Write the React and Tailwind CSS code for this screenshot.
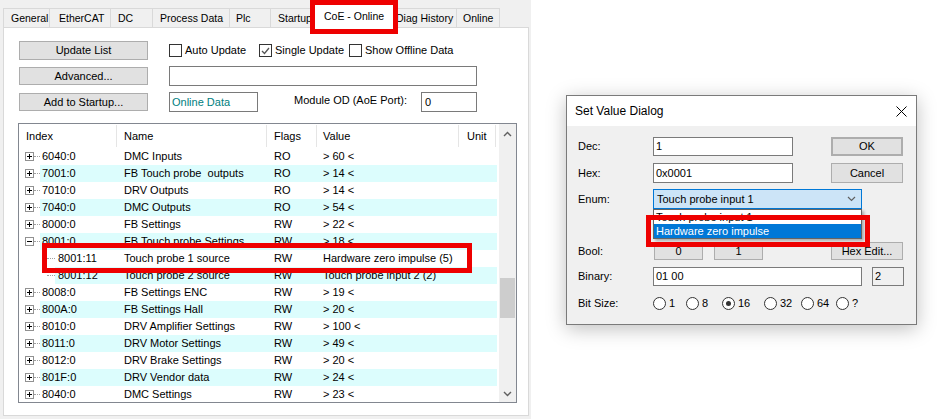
import React from "react";

const tabs = [
  { label: "General", cls: "w-[47px] pl-[7px]" },
  { label: "EtherCAT", cls: "w-[61px] pl-[9px]" },
  { label: "DC", cls: "w-[42px] pl-[7px]" },
  { label: "Process Data", cls: "w-[77px] pl-[7px]" },
  { label: "Plc", cls: "w-[41px] pl-[6px]" },
  { label: "Startup", cls: "w-[40px] pl-[7px]" },
  { label: "CoE - Online", cls: "w-[83px] pl-[12px]", active: true },
  { label: "Diag History", cls: "w-[63px] pl-[2px]" },
  { label: "Online", cls: "w-[43px] pl-[6px]" },
];

const rows = [
  { idx: "6040:0", name: "DMC Inputs", flags: "RO", value: "> 60 <" },
  { idx: "7001:0", name: "FB Touch probe  outputs", flags: "RO", value: "> 14 <" },
  { idx: "7010:0", name: "DRV Outputs", flags: "RO", value: "> 14 <" },
  { idx: "7040:0", name: "DMC Outputs", flags: "RO", value: "> 54 <" },
  { idx: "8000:0", name: "FB Settings", flags: "RW", value: "> 22 <" },
  { idx: "8001:0", name: "FB Touch probe Settings", flags: "RW", value: "> 18 <", open: true },
  { idx: "8001:11", name: "Touch probe 1 source", flags: "RW", value: "Hardware zero impulse (5)", child: true },
  { idx: "8001:12", name: "Touch probe 2 source", flags: "RW", value: "Touch probe input 2 (2)", child: true },
  { idx: "8008:0", name: "FB Settings ENC", flags: "RW", value: "> 19 <" },
  { idx: "800A:0", name: "FB Settings Hall", flags: "RW", value: "> 20 <" },
  { idx: "8010:0", name: "DRV Amplifier Settings", flags: "RW", value: "> 100 <" },
  { idx: "8011:0", name: "DRV Motor Settings", flags: "RW", value: "> 49 <" },
  { idx: "8012:0", name: "DRV Brake Settings", flags: "RW", value: "> 20 <" },
  { idx: "801F:0", name: "DRV Vendor data", flags: "RW", value: "> 24 <" },
  { idx: "8040:0", name: "DMC Settings", flags: "RW", value: "> 23 <" },
];

function Button({ children, className }) {
  return (
    <div className={`flex items-center justify-center bg-[#e1e1e1] border border-[#adadad] shrink-0 ${className}`}>
      {children}
    </div>
  );
}

function Check({ label, checked, className }) {
  return (
    <div className={`flex items-center gap-[3px] ${className}`}>
      <div className="w-[13px] h-[13px] shrink-0 border border-[#333] bg-white flex items-center justify-center">
        {checked && (
          <svg width="9" height="8" viewBox="0 0 9 8">
            <path d="M1 4 L3.5 6.5 L8 1" fill="none" stroke="#555" strokeWidth="1.3" />
          </svg>
        )}
      </div>
      <span className="whitespace-nowrap">{label}</span>
    </div>
  );
}

function Expander({ open }) {
  return (
    <svg width="9" height="9" viewBox="0 0 9 9" className="shrink-0">
      <rect x="0.5" y="0.5" width="8" height="8" fill="white" stroke="#919191" />
      <line x1="2" y1="4.5" x2="7" y2="4.5" stroke="#000" />
      {!open && <line x1="4.5" y1="2" x2="4.5" y2="7" stroke="#000" />}
    </svg>
  );
}

function Row({ r, i }) {
  const cyan = i % 2 === 1;
  return (
    <div className="flex h-[17px] leading-[17px] shrink-0 w-[478px]">
      {r.child ? (
        <div className="w-[36px] shrink-0 flex items-center pl-[28px]">
          <div className="w-[8px] border-t border-dotted border-[#a0a0a0]" />
        </div>
      ) : (
        <div className="w-[21px] shrink-0 flex items-center pl-[6px]">
          <Expander open={r.open} />
          <div className="w-[6px] border-t border-dotted border-[#a0a0a0]" />
        </div>
      )}
      <div className={`flex flex-1 ${cyan ? "bg-[#dcfdfd]" : "bg-white"}`}>
        <div className={r.child ? "w-[62px] pl-[3px] shrink-0" : "w-[77px] pl-[2px] shrink-0"}>{r.idx}</div>
        <div className="w-[150px] pl-[7px] whitespace-pre shrink-0">{r.name}</div>
        <div className="w-[50px] pl-[7px] shrink-0">{r.flags}</div>
        <div className="w-[142px] pl-[6px] whitespace-nowrap shrink-0">{r.value}</div>
      </div>
    </div>
  );
}

function Radio({ label, checked, className }) {
  return (
    <div className={`flex items-center gap-[3px] ${className}`}>
      <div className="w-[13px] h-[13px] shrink-0 rounded-full border border-[#333] bg-white flex items-center justify-center">
        {checked && <div className="w-[5px] h-[5px] rounded-full bg-[#333]" />}
      </div>
      <span>{label}</span>
    </div>
  );
}

export default function App() {
  return (
    <div className="flex w-[937px] h-[419px] bg-white text-black text-[11px] font-['Liberation_Sans',Arial,sans-serif]">
      {/* left: CoE - Online tab */}
      <div className="relative w-[531px] h-[419px] shrink-0 bg-[#f0f0f0] pt-[8px] pl-[3px]">
        <div className="relative z-10 flex items-end h-[19px] text-[10.5px]">
          {tabs.map((t) =>
            t.active ? (
              <div
                key={t.label}
                className={`h-[24px] mb-[-1px] shrink-0 bg-white border border-b-0 border-[#d9d9d9] flex items-center whitespace-nowrap ${t.cls}`}
              >
                {t.label}
              </div>
            ) : (
              <div
                key={t.label}
                className={`h-[19px] shrink-0 bg-[#f0f0f0] border border-b-0 border-l-0 first:border-l border-[#d9d9d9] flex items-center pt-[2px] whitespace-nowrap overflow-hidden ${t.cls}`}
              >
                {t.label}
              </div>
            )
          )}
        </div>

        <div className="w-[526px] h-[389px] border border-[#d9d9d9] bg-white">
          <div className="flex items-center h-[19px] mt-[13px] ml-[15px]">
            <Button className="w-[129px] h-[19px]">Update List</Button>
            <div className="flex ml-[21px]">
              <Check label="Auto Update" className="w-[90px]" />
              <Check label="Single Update" checked className="w-[90px]" />
              <Check label="Show Offline Data" />
            </div>
          </div>
          <div className="flex items-center h-[20px] mt-[6px] ml-[15px]">
            <Button className="w-[129px] h-[18px]">Advanced...</Button>
            <div className="ml-[21px] w-[308px] h-[20px] border border-[#7a7a7a] bg-white" />
          </div>
          <div className="flex items-center h-[20px] mt-[6px] ml-[15px]">
            <Button className="w-[129px] h-[18px]">Add to Startup...</Button>
            <div className="ml-[21px] w-[89px] h-[20px] border border-[#7a7a7a] bg-white text-[#008080] pl-[2px] leading-[18px]">
              Online Data
            </div>
            <div className="ml-[36px] w-[127px] pb-[3px]">Module OD (AoE Port):</div>
            <div className="w-[56px] h-[20px] border border-[#7a7a7a] bg-white pl-[3px] leading-[18px]">0</div>
          </div>

          <div className="ml-[14px] mt-[11px] w-[499px] h-[280px] border border-[#828790] flex overflow-hidden">
            <div className="w-[480px] shrink-0 flex flex-col overflow-hidden">
              <div className="flex h-[24px] shrink-0 items-center">
                <div className="w-[98px] h-[22px] pl-[7px] flex items-center border-r border-[#e5e5e5]">Index</div>
                <div className="w-[150px] h-[22px] pl-[7px] flex items-center border-r border-[#e5e5e5]">Name</div>
                <div className="w-[50px] h-[22px] pl-[7px] flex items-center border-r border-[#e5e5e5]">Flags</div>
                <div className="w-[142px] h-[22px] pl-[6px] flex items-center border-r border-[#e5e5e5]">Value</div>
                <div className="w-[37px] h-[22px] pl-[8px] flex items-center border-r border-[#e5e5e5]">Unit</div>
              </div>
              {rows.map((r, i) => (
                <Row key={r.idx} r={r} i={i} />
              ))}
            </div>
            <div className="w-[17px] shrink-0 bg-[#f0f0f0] flex flex-col">
              <div className="h-[17px] shrink-0 flex items-center justify-center pt-[3px]">
                <svg width="9" height="6" viewBox="0 0 9 6">
                  <path d="M1 5 L4.5 1.5 L8 5" fill="none" stroke="#606060" strokeWidth="1.4" />
                </svg>
              </div>
              <div className="h-[137px] shrink-0" />
              <div className="h-[40px] mx-[1px] shrink-0 bg-[#cdcdcd]" />
              <div className="flex-1" />
              <div className="h-[17px] shrink-0 flex items-center justify-center">
                <svg width="9" height="6" viewBox="0 0 9 6">
                  <path d="M1 1 L4.5 4.5 L8 1" fill="none" stroke="#606060" strokeWidth="1.4" />
                </svg>
              </div>
            </div>
          </div>
        </div>

        {/* highlight boxes */}
        <div className="absolute left-[310px] top-0 w-[88px] h-[34px] border-[5px] border-[#ee0000] z-20" />
        <div className="absolute left-[42px] top-[243px] w-[430px] h-[30px] border-[5px] border-[#ee0000] z-20" />
      </div>

      {/* right: Set Value Dialog */}
      <div className="pl-[35px] pt-[95px]">
        <div className="relative w-[351px] h-[230px] border border-[#7a7a7a] bg-[#f0f0f0] shadow-[0_4px_18px_rgba(0,0,0,0.25)]">
          <div className="h-[30px] bg-white flex items-center justify-between pl-[8px] pr-[9px] text-[12px]">
            <span>Set Value Dialog</span>
            <svg width="11" height="11" viewBox="0 0 11 11">
              <path d="M0.5 0.5 L10.5 10.5 M10.5 0.5 L0.5 10.5" stroke="#000" strokeWidth="1" />
            </svg>
          </div>

          <div className="pl-[11px] pt-[11px]">
            <div className="flex items-center h-[19px]">
              <div className="w-[75px]">Dec:</div>
              <div className="w-[140px] h-[19px] border border-[#7a7a7a] bg-white pl-[2px] leading-[17px]">1</div>
              <Button className="ml-[38px] w-[72px] h-[19px] border-2 border-[#0078d7]">OK</Button>
            </div>
            <div className="flex items-center h-[20px] mt-[7px]">
              <div className="w-[75px]">Hex:</div>
              <div className="w-[140px] h-[20px] border border-[#7a7a7a] bg-white pl-[2px] leading-[18px]">0x0001</div>
              <Button className="ml-[38px] w-[72px] h-[20px]">Cancel</Button>
            </div>
            <div className="flex items-center h-[20px] mt-[6px]">
              <div className="w-[75px]">Enum:</div>
              <div className="w-[209px] h-[20px] border border-[#0078d7] bg-[#cce4f7] pl-[3px] flex items-center justify-between pr-[5px]">
                <span>Touch probe input 1</span>
                <svg width="9" height="6" viewBox="0 0 9 6">
                  <path d="M1 1 L4.5 4.5 L8 1" fill="none" stroke="#606060" strokeWidth="1.2" />
                </svg>
              </div>
            </div>
            <div className="flex items-center h-[18px] mt-[33px]">
              <div className="w-[75px]">Bool:</div>
              <Button className="ml-[1px] w-[49px] h-[18px]">0</Button>
              <Button className="ml-[11px] w-[49px] h-[18px]">1</Button>
              <Button className="ml-[68px] w-[72px] h-[18px]">Hex Edit...</Button>
            </div>
            <div className="flex items-center h-[19px] mt-[7px]">
              <div className="w-[75px]">Binary:</div>
              <div className="w-[209px] h-[19px] border border-[#7a7a7a] bg-white pl-[2px] leading-[17px]">01 00</div>
              <div className="ml-[10px] w-[32px] h-[19px] border border-[#7a7a7a] pl-[2px] leading-[17px]">2</div>
            </div>
            <div className="flex items-center h-[13px] mt-[11px]">
              <div className="w-[75px]">Bit Size:</div>
              <Radio label="1" className="w-[33px]" />
              <Radio label="8" className="w-[36px]" />
              <Radio label="16" checked className="w-[42px]" />
              <Radio label="32" className="w-[37px]" />
              <Radio label="64" className="w-[35px]" />
              <Radio label="?" />
            </div>
          </div>

          {/* open enum list */}
          <div className="absolute left-[86px] top-[113px] w-[209px] h-[30px] bg-white border border-[#646464] shadow-[2px_2px_3px_rgba(0,0,0,0.3)] flex flex-col">
            <div className="h-[14px] pl-[2px] leading-[14px]">Touch probe input 1</div>
            <div className="h-[14px] pl-[2px] leading-[14px] bg-[#0078d7] text-white">Hardware zero impulse</div>
          </div>
          <div className="absolute left-[79px] top-[119px] w-[224px] h-[32px] border-[5px] border-[#ee0000]" />
        </div>
      </div>
    </div>
  );
}
